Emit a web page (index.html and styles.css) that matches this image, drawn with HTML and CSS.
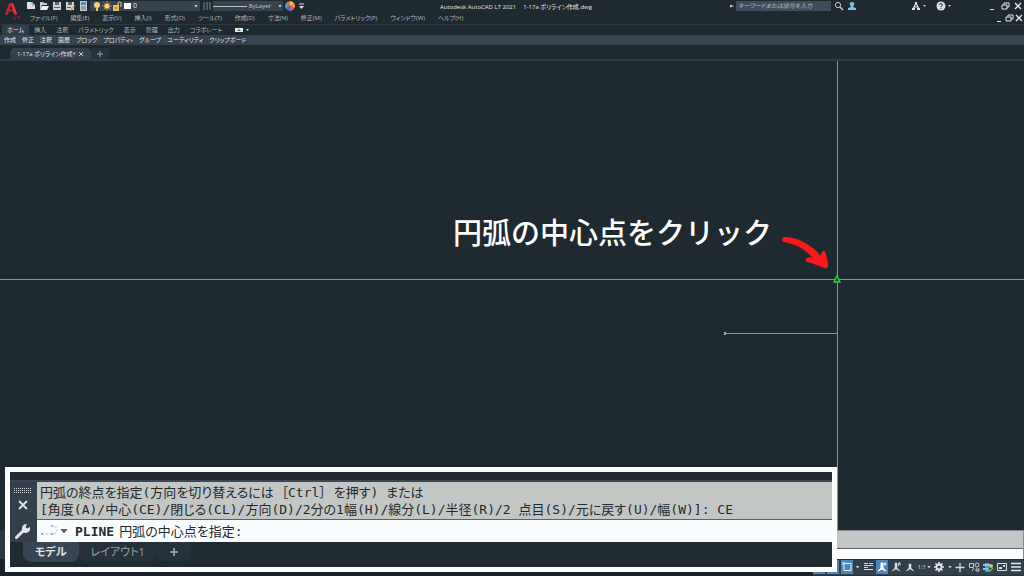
FILE: index.html
```html
<!DOCTYPE html>
<html lang="ja">
<head>
<meta charset="utf-8">
<title>Autodesk AutoCAD LT 2021 1-17a ポリライン作成.dwg</title>
<link rel="stylesheet" href="styles.css">
</head>
<body>
<header class="header">
  <button class="logo" aria-label="アプリケーション メニュー">
    <svg viewBox="0 0 20 20" width="20" height="20"><path d="M2 13 6 1h4l4 11-3 .5-1-3H6l-1 3z" fill="#c4232c"/><path d="m8 4 1.500 3.500h-3z" fill="#1f2a30"/><path d="m8 1 2 0 4 11-2 1z" fill="#e3363f"/><path d="M11 14v3h2M14 14.500h3M15.500 14.500V17" stroke="#8f2730" fill="none"/></svg>
  </button>
  <div class="bars">
    <div class="title-row">
      <div class="quick">
        <button class="icon" aria-label="新規"><svg viewBox="0 0 10 10"><path d="M1 1h5l3 3v4H1z" fill="#dfe3e6"/><path d="M6 1v3h3" stroke="#8b949b" fill="none"/></svg></button>
        <button class="icon" aria-label="開く"><svg viewBox="0 0 10 10"><path d="M1 9V1h3l1 1h3v2H3z" fill="#c9ced1"/><path d="M3 5h7L8 9H1z" fill="#eef0f1"/></svg></button>
        <button class="icon" aria-label="保存"><svg viewBox="0 0 10 10"><path d="M1 1h8v8H1z" fill="#cfd4d7"/><path d="M3 1h4v3H3zM2 6h6v1H2z" fill="#59636c"/></svg></button>
        <button class="icon" aria-label="名前を付けて保存"><svg viewBox="0 0 10 10"><path d="M1 1h8v8H1z" fill="#cfd4d7"/><path d="M3 1h4v3H3zM2 6h4v1H2z" fill="#59636c"/><path d="m5 9 4-5 1 1-4 5z" fill="#e0a050"/></svg></button>
        <button class="icon" aria-label="印刷"><svg viewBox="0 0 10 10"><path d="M2 0h7v10H2z" fill="#c2ccd4"/><path d="M3 1h5v3H3z" fill="#4c91c8"/><path d="M3 6h5M3 8h5" stroke="#65717b"/></svg></button>
      </div>
      <button class="layer combo" aria-label="画層">
        <svg viewBox="0 0 10 10"><circle cx="5" cy="4" r="3" fill="#f4d27a"/><path d="M4 6h2v4H4z" fill="#e9c86d"/></svg>
        <svg viewBox="0 0 10 10"><path d="M5 0v10M0 5h10M1.500 1.500l7 7M8.500 1.500l-7 7" stroke="#c9a357" stroke-width=".8"/><circle cx="5" cy="5" r="2.600" fill="#ffd56c"/></svg>
        <svg viewBox="0 0 10 10"><path d="M1 4h6v6H1z" fill="#f0bd59"/><path d="M6 4V2q0-1 1.500-1T9 2v4" stroke="#f0d28f" fill="none"/><path d="M4 6v2" stroke="#705523"/></svg>
        <svg viewBox="0 0 10 10"><path d="M2 2h7v6H2z" fill="#fff"/></svg>
        <span class="grow">0</span><i class="caret"></i>
      </button>
      <button class="icon" aria-label="画層プロパティ"><svg viewBox="0 0 10 10"><path d="M1 2h8M1 4h8M1 6h8M1 8h8" stroke="#7c8790" stroke-dasharray="2 1"/></svg></button>
      <button class="linetype combo" aria-label="線種"><i class="rule"></i>ByLayer<i class="caret"></i></button>
      <button class="icon" aria-label="オブジェクトの色"><svg viewBox="0 0 10 10"><path d="M5 5V0a5 5 0 0 1 4.300 2.500z" fill="#f2c53c"/><path d="M5 5 9.300 2.500a5 5 0 0 1 0 5z" fill="#f0963c"/><path d="m5 5 4.300 2.500A5 5 0 0 1 5 10z" fill="#ca5a9e"/><path d="M5 5v5A5 5 0 0 1 .7 7.500z" fill="#4767c9"/><path d="M5 5 .7 7.500a5 5 0 0 1 0-5z" fill="#3da7d6"/><path d="M5 5 .7 2.500A5 5 0 0 1 5 0z" fill="#ef6a52"/></svg></button>
      <button class="icon narrow" aria-label="カスタマイズ"><svg viewBox="0 0 10 10"><path d="M3 3h5" stroke="#dce0e3"/><path d="M3 5h5L5.500 8z" fill="#dce0e3"/></svg></button>
      <h1 class="title"><span>Autodesk AutoCAD LT 2021</span><span>1-17a ポリライン作成.dwg</span></h1>
      <div class="search">
        <i class="caret side"></i>
        <input class="search-box" type="text" aria-label="検索" placeholder="キーワードまたは語句を入力">
        <button class="icon" aria-label="検索"><svg viewBox="0 0 10 10"><circle cx="4" cy="4" r="2.600" fill="none" stroke="#c5cacd"/><path d="m6 6 3 3" stroke="#c5cacd" stroke-width="1.500"/></svg></button>
        <button class="icon" aria-label="サインイン"><svg viewBox="0 0 10 10"><path d="M5 1q3 0 2 3L6 6l3 1v2H1V7l3-1-1-2q-1-3 2-3" fill="#7cc0ea"/></svg></button>
      </div>
      <div class="help">
        <button class="icon" aria-label="Autodesk App Store"><svg viewBox="0 0 10 10"><path d="m2 8 3-6 3 6M3 6h4" fill="none" stroke="#e2e5e7" stroke-width="1.200"/><path d="M1 7h3v2H1zM6 7h3v2H6zM4 1h2v2H4z" fill="#e2e5e7"/></svg></button>
        <i class="caret dot"></i>
        <button class="icon help-icon" aria-label="ヘルプ"><svg viewBox="0 0 10 10"><circle cx="5" cy="5" r="4.500" fill="#dce0e2"/><path d="M3.500 4q0-1.500 1.500-1.500T6.500 4Q6 5 5 5.500v.7M5 7v1" fill="none" stroke="#334"/></svg></button>
        <i class="caret dot"></i>
      </div>
      <div class="window-buttons">
        <button class="icon" aria-label="最小化"><svg viewBox="0 0 10 10"><path d="M3 8.500h4" stroke="#e8eaeb"/></svg></button>
        <button class="icon" aria-label="元に戻す"><svg viewBox="0 0 10 10"><path d="M4 3.500V2h5v4H7M2 4h5v4H2z" fill="none" stroke="#e8eaeb"/></svg></button>
        <button class="icon" aria-label="閉じる"><svg viewBox="0 0 10 10"><path d="m2 2 6 6M8 2 2 8" stroke="#e8eaeb" stroke-width="1.300"/></svg></button>
      </div>
    </div>
    <div class="menu-row">
      <nav class="menu">
        <a href="#">ファイル(F)</a><a href="#">編集(E)</a><a href="#">表示(V)</a><a href="#">挿入(I)</a><a href="#">形式(O)</a><a href="#">ツール(T)</a><a href="#">作成(D)</a><a href="#">寸法(N)</a><a href="#">修正(M)</a><a href="#">パラメトリック(P)</a><a href="#">ウィンドウ(W)</a><a href="#">ヘルプ(H)</a>
      </nav>
      <div class="doc-buttons">
        <button class="icon" aria-label="図面を最小化"><svg viewBox="0 0 10 10"><path d="M3 8.500h4" stroke="#e8eaeb"/></svg></button>
        <button class="icon" aria-label="図面を元に戻す"><svg viewBox="0 0 10 10"><path d="M4 3.500V2h5v4H7M2 4h5v4H2z" fill="none" stroke="#e8eaeb"/></svg></button>
        <button class="icon" aria-label="図面を閉じる"><svg viewBox="0 0 10 10"><path d="m2 2 6 6M8 2 2 8" stroke="#e8eaeb" stroke-width="1.300"/></svg></button>
      </div>
    </div>
  </div>
</header>
<nav class="ribbon-tabs">
  <a class="active" href="#">ホーム</a><a href="#">挿入</a><a href="#">注釈</a><a href="#">パラメトリック</a><a href="#">表示</a><a href="#">管理</a><a href="#">出力</a><a href="#">コラボレート</a>
  <button class="ribbon-toggle" aria-label="リボンを最小化"><svg viewBox="0 0 14 6" width="14" height="6"><path d="M0 1h8v4H0z" fill="#e8ebec"/><path d="M2 4h4L4 2z" fill="#5a646e"/><path d="M11 2h3l-1.500 2z" fill="#c8cdd0"/></svg></button>
</nav>
<div class="panels">
  <button>作成</button><button>修正</button><button>注釈</button><button>画層</button><button>ブロック</button><button>プロパティ <small>»</small></button><button>グループ</button><button>ユーティリティ</button><button>クリップボード</button>
</div>
<nav class="file-tabs">
  <a class="file-tab" href="#">1-17a ポリライン作成* <svg viewBox="0 0 6 6" width="6" height="6"><path d="m1 1 4 4M5 1 1 5" stroke="#c3c9cd"/></svg></a>
  <button class="new-tab" aria-label="新しいタブ"><svg viewBox="0 0 6 6" width="6" height="6"><path d="M3 0v6M0 3h6" stroke="#9da6ac"/></svg></button>
</nav>
<main class="canvas">
  <i class="cross-h"></i><i class="cross-v"></i><i class="segment"></i>
  <svg class="snap" viewBox="0 0 10 10" width="10" height="10"><path d="m5 1.500 3 6.500H2z" fill="#244b32" stroke="#22d43a" stroke-width="1.300"/></svg>
  <p class="caption">円弧の中心点をクリック</p>
  <svg class="arrow" viewBox="0 0 48 34" width="48" height="34"><path d="M4 2Q2 3 2 5q0 1.500 2 2c12 2 21 7 29 16-2-1-4-1-6 0-2 1-2 3 0 4 6 1 12 4 17 6 3 1 5-1 4-5l-2-9q-1-4-3-3-3 2-2 5C32 10 18 2 4 2z" fill="#ff1719"/></svg>
</main>
<footer>
  <div class="command-strip">
    <div class="strip-handle"></div>
    <div class="strip-body"><div class="history"></div><div class="prompt"></div></div>
  </div>
  <div class="status">
    <div class="status-tools">
    <button class="on" aria-label="グリッド"></button>
    <button class="on" aria-label="極トラッキング"></button>
    <button class="on" aria-label="オブジェクト スナップ"><svg viewBox="0 0 12 12"><path d="M3 2.500h7v7H3z" fill="none" stroke="#e9f1f8"/><path d="M1 1h3v3H1z" fill="#9fcaf0"/></svg></button>
    <i class="caret"></i>
    <button aria-label="線の太さ"><svg viewBox="0 0 12 12"><path d="M2 2.500h4M2 4.500h9M2 6.500h4M2 8.500h9M7 2.500h4" stroke="#d5dade"/></svg></button>
    <button class="on" aria-label="注釈オブジェクト"><svg viewBox="0 0 12 12"><path d="m2 10 3-3V2h2v5l3 3-4-2z" fill="#fff" stroke="#fff"/><circle cx="9" cy="3" r="1.500" fill="#cde4f7"/></svg></button>
    <button aria-label="自動尺度"><svg viewBox="0 0 12 12"><path d="m2 10 3-3V2h2v5l3 3-4-2z" fill="#dce0e3" stroke="#dce0e3" stroke-width=".5"/><path d="m8 5 2-4M8 2l3 2" stroke="#dce0e3"/></svg></button>
    <button aria-label="注釈尺度"><svg viewBox="0 0 12 12"><path d="m2 10 3-3V3h2v4l3 3-4-2z" fill="#dce0e3" stroke="#dce0e3" stroke-width=".5"/></svg></button>
    <button class="scale">1:1<i class="caret"></i></button>
    <button aria-label="ワークスペース"><svg viewBox="0 0 12 12"><path d="M6 1v10M1 6h10M2.500 2.500l7 7M9.500 2.500l-7 7" stroke="#e5e8ea" stroke-width="1.600"/><circle cx="6" cy="6" r="2.500" fill="#35404b" stroke="#e5e8ea" stroke-width="1.800"/></svg></button>
    <i class="caret"></i>
    <button aria-label="注釈モニター"><svg viewBox="0 0 12 12"><path d="M6 2v9M1.500 6.500h9" stroke="#dce0e3" stroke-width="1.300"/></svg></button>
    <button aria-label="選択表示"><svg viewBox="0 0 12 12"><path d="M1.500 2.500h4v4h-4zM8 8h3v2H8z" fill="none" stroke="#c8ced2"/><circle cx="9" cy="4" r="2" fill="none" stroke="#c8ced2"/><path d="m4 10 2-3" stroke="#c8ced2"/></svg></button>
    <button aria-label="グラフィックス"><svg viewBox="0 0 12 12"><path d="M3 2h4v9H3z" fill="#4b9fe0"/><path d="M1 3h7v2H1zM1 7h5v2H1z" fill="#8fc0e8"/><circle cx="9" cy="5" r="2" fill="#edb44d"/><path d="m6 8 2 2 3-3" fill="none" stroke="#53c65d" stroke-width="1.500"/></svg></button>
    <button aria-label="フルスクリーン"><svg viewBox="0 0 12 12"><path d="M1.500 2.500h9v7h-9z" fill="none" stroke="#dce0e3"/><path d="M3 6h3v2H3zM7 4h2v2H7z" fill="#dce0e3"/></svg></button>
    <button aria-label="カスタマイズ"><svg viewBox="0 0 12 12"><path d="M1 2.500h10M1 6h10M1 9.500h10" stroke="#e5e8ea" stroke-width="1.400"/></svg></button>
    </div>
  </div>
</footer>
<section class="inset">
  <div class="inset-main">
    <div class="handle">
      <svg viewBox="0 0 20 6" width="20" height="6"><path d="M1 1h18M1 3h18M1 5h18" stroke="#d0d5d9" stroke-width="1" stroke-dasharray="1 1" shape-rendering="crispEdges"/></svg>
      <svg viewBox="0 0 12 12" width="12" height="12"><path d="m2 2 8 8M10 2l-8 8" stroke="#e1e5e7" stroke-width="1.800"/></svg>
      <svg viewBox="0 0 16 16" width="16" height="16"><path d="M1.500 14.500 9 7" stroke="#e4e7e9" stroke-width="3" stroke-linecap="round"/><path d="M7 6q0-5 5-5l-1.500 3 1.500 1.500L15 4q1 5-4 6-2 0-4-1z" fill="#e4e7e9"/></svg>
    </div>
    <div class="console">
      <div class="log">円弧の終点を指定(方向を切り替えるには ［Ctrl］ を押す) または<br>[角度(A)/中心(CE)/閉じる(CL)/方向(D)/2分の1幅(H)/線分(L)/半径(R)/2 点目(S)/元に戻す(U)/幅(W)]: CE</div>
      <label class="entry"><svg viewBox="0 0 20 14" width="20" height="14"><path d="M1 10h11q5 0 5-4t-5-4" fill="none" stroke="#b5c4d2" stroke-dasharray="3 1"/><path d="M1 9h2v2H1zM11 9h2v2h-2zM11 1h2v2h-2z" fill="#8cb8e0"/></svg><i class="caret dark"></i><b>PLINE</b><span>円弧の中心点を指定:</span><input class="entry-box" type="text"></label>
    </div>
  </div>
  <nav class="layouts">
    <a class="current" href="#">モデル</a><a href="#">レイアウト1</a><a href="#" aria-label="新しいレイアウト"><svg viewBox="0 0 10 10" width="10" height="10"><path d="M5 1v8M1 5h8" stroke="#a6aeb4" stroke-width="1.600"/></svg></a>
  </nav>
</section>
</body>
</html>
```
FILE: styles.css
```css
* { box-sizing: border-box; }
body {
  position: relative;
  display: flex;
  flex-direction: column;
  min-height: 100vh;
  margin: 0;
  overflow: hidden;
  background: #1f2a30;
  color: #c3c9cc;
  font: 6px/10px "Open Sans", "Noto Sans CJK JP", sans-serif;
  font-feature-settings: "palt";
}
a { color: inherit; text-decoration: none; }
button { display: flex; align-items: center; padding: 0; border: 0; background: none; color: inherit; font: inherit; font-feature-settings: inherit; }
svg { display: block; flex: none; }
a, button, span, h1, p { white-space: nowrap; }

.header { display: flex; align-items: flex-start; border-bottom: 1px solid #2c3843; }
.logo { width: 24px; padding: 2px 0 0 3px; }
.bars { flex: 1; min-width: 0; }
.title-row { display: flex; align-items: center; height: 12px; }
.icon { justify-content: center; width: 13px; height: 12px; }
.icon svg { width: 10px; height: 10px; }
.icon.narrow { width: 9px; }
.quick { display: flex; width: 66px; }
.combo { height: 10px; background: #384350; }
.combo svg { width: 10px; height: 10px; }
.layer { width: 110px; padding: 0 2px; }
.grow { flex: 1; padding-left: 1px; color: #e4e7e8; font-size: 7px; text-align: left; }
.linetype { gap: 2px; width: 70px; }
.linetype .caret { margin: 0 1px 0 5px; }
.rule { flex: 1; height: 1px; background: #b9c0c5; }
.caret { flex: none; width: 4px; height: 3px; background: #c9ced1; clip-path: polygon(0 0, 100% 0, 50% 100%); }
.caret.side { clip-path: polygon(0 0, 100% 50%, 0 100%); }
.caret.dot { width: 3px; height: 2px; }
.caret.dark { width: 8px; height: 5px; background: #555b60; }
.title { display: flex; flex: 1; justify-content: center; gap: 7px; margin: 0; padding: 1px 0 0 52px; font-size: 6px; font-weight: 400; color: #e4e7e8; }
.search { display: flex; align-items: center; gap: 2px; padding-left: 55px; }
.search-box { width: 95px; height: 10px; padding: 0 2px; border: 0; background: #404c5c; color: #dde1e4; font: italic 6px/10px "Open Sans", "Noto Sans CJK JP", sans-serif; font-feature-settings: "palt"; }
.search-box::placeholder { color: #b4bcc3; opacity: 1; }
.search .icon { width: 11px; }
.help { display: flex; align-items: center; gap: 1px; padding-left: 52px; }
.help-icon { margin-left: 7px; }
.window-buttons, .doc-buttons { display: flex; }
.window-buttons { padding-left: 34px; }
.menu-row { display: flex; justify-content: space-between; height: 12px; color: #b3babe; }
.menu { display: flex; align-items: center; gap: 13px; padding: 0 0 0 6px; }
.doc-buttons .icon { width: 10px; }

.ribbon-tabs { display: flex; align-items: stretch; height: 10px; padding-left: 2px; color: #aeb6ba; }
.ribbon-tabs a { padding: 0 5px; }
.ribbon-tabs .active { background: #303c47; color: #e0e4e6; }
.ribbon-toggle { margin-left: 8px; }
.panels { display: flex; gap: 2px; height: 10px; padding-left: 2px; background: #39434f; color: #e4e7e9; }
.panels button { padding: 0 2px; background: #35404c; }
.panels small { font-size: 6px; }
.file-tabs { display: flex; height: 16px; padding: 3px 0 0 10px; border-bottom: 2px solid #303c49; }
.file-tab { display: flex; align-items: center; gap: 2px; padding: 0 7px; border-radius: 5px 5px 0 0; background: #34404d; color: #e0e4e6; }
.new-tab { padding: 0 6px; border-radius: 4px 4px 0 0; background: #27333b; }

.canvas { position: relative; flex: 1; min-height: 468px; }
.cross-h { position: absolute; top: 218px; left: 0; width: 100%; height: 1px; background: #8b9497; }
.cross-v { position: absolute; top: 0; left: 837px; width: 1px; height: 100%; background: #8b9497; }
.segment { position: absolute; top: 272px; left: 725px; width: 112px; height: 1px; background: #8b9497; }
.segment::before { content: ""; position: absolute; top: -1px; left: -1px; width: 2px; height: 3px; background: #a6aeb1; }
.snap { position: absolute; top: 213px; left: 832px; }
.caption { position: absolute; top: 148px; left: 453px; margin: 0; color: #fff; font: 500 29px/44px "Noto Sans CJK JP", sans-serif; font-feature-settings: normal; }
.arrow { position: absolute; top: 174px; left: 780px; }

.command-strip { display: flex; height: 29px; }
.strip-handle { width: 12px; background: #2b3741; }
.strip-body { display: flex; flex: 1; flex-direction: column; border: 1px solid #818b91; border-width: 1px 1px 0 0; background: #c2c6c5; }
.history { flex: 1; }
.prompt { height: 11px; border-top: 1px solid #59636b; background: #fbfdfe; }
.status { display: flex; justify-content: flex-end; background: #19212a; }
.status-tools { display: flex; align-items: center; gap: 2px; height: 17px; padding: 0 2px 1px 0; border: solid #27313a; border-width: 1px 0; background: #333f4a; }
.status-tools .caret { margin: 0 0 0 1px; }
.status svg { width: 12px; height: 12px; }
.status .on { width: 12px; height: 14px; background: #4e86ba; }
.scale { color: #e0e4e6; }

.inset { position: absolute; top: 467px; left: 5px; width: 832px; border: 5px solid #fff; padding-top: 8px; background: #202b31; }
.inset-main { display: flex; height: 62px; border-top: 2px solid #3a4654; background: #333f4b; }
.handle { display: flex; flex-direction: column; align-items: center; gap: 6px; width: 27px; padding: 5px 2px 0 0; }
.handle svg:last-child { margin-top: 6px; }
.console { flex: 1; min-width: 0; display: flex; flex-direction: column; color: #26292b; font: 13px/17px "DejaVu Sans Mono", "Noto Sans CJK JP", monospace; font-feature-settings: "palt"; }
.log { height: 38px; padding: 2px 3px; border-bottom: 1px solid #59636b; background: #c2c6c5; white-space: nowrap; }
.entry { display: flex; flex: 1; align-items: center; padding-left: 3px; background: #fafdfe; }
.entry b { padding: 0 5px 0 7px; }
.entry-box { flex: 1; min-width: 0; height: 16px; border: 0; background: none; font: inherit; }
.layouts { display: flex; height: 25px; padding: 0 0 5px 13px; color: #9aa3a9; font-size: 11px; line-height: 18px; }
.layouts a { display: flex; align-items: center; padding: 0 12px; background: #26323b; border-radius: 0 0 8px 8px; }
.layouts .current { background: #384553; color: #e0e4e6; font-weight: 600; }
```
